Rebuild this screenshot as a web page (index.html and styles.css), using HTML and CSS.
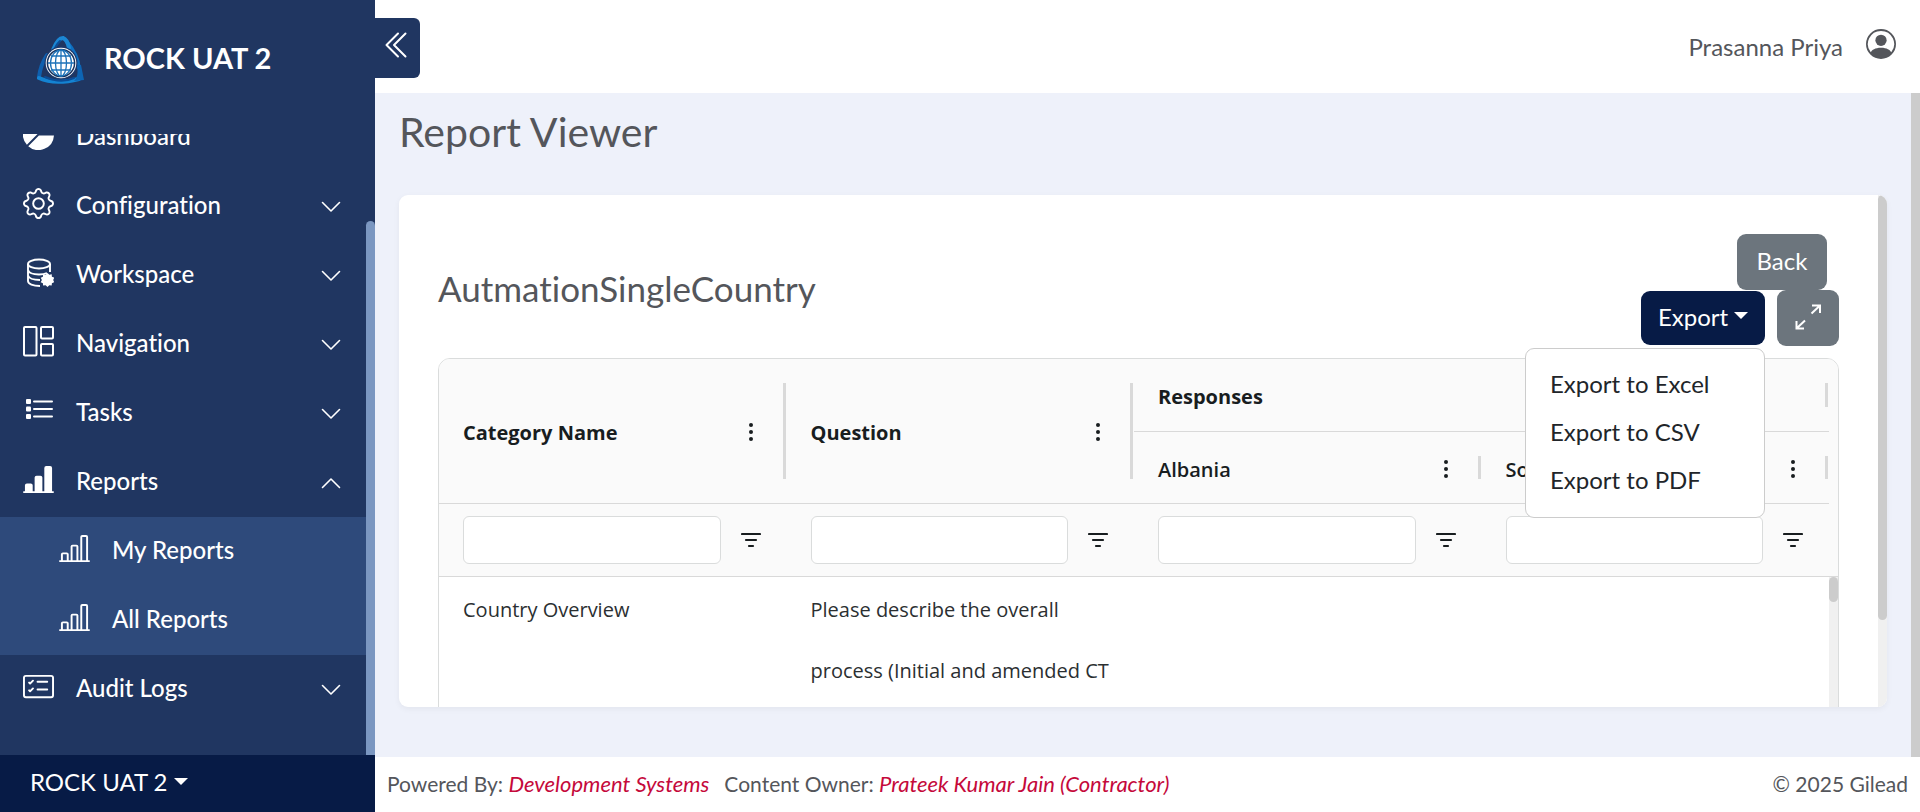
FILE: index.html
```html
<!DOCTYPE html>
<html lang="en">
<head>
<meta charset="utf-8">
<title>Report Viewer</title>
<link rel="stylesheet" href="styles.css">
</head>
<body>
<svg class="sprite" aria-hidden="true">
  <symbol id="chevron-down" viewBox="0 0 20 12"><path d="M1.500 1.500 10 10l8.500-8.500" fill="none" stroke="currentColor" stroke-width="1.600" stroke-linecap="round" stroke-linejoin="round"/></symbol>
  <symbol id="bars" viewBox="0 0 16 16"><path d="M11 2a1 1 0 0 1 1-1h2a1 1 0 0 1 1 1v12h.5a.5.5 0 0 1 0 1H.5a.5.5 0 0 1 0-1H1v-3a1 1 0 0 1 1-1h2a1 1 0 0 1 1 1v3h1V7a1 1 0 0 1 1-1h2a1 1 0 0 1 1 1v7h1V2zm1 12h2V2h-2v12zm-3 0V7H7v7h2zm-5 0v-3H2v3h2z"/></symbol>
  <symbol id="dots" viewBox="0 0 20 20"><circle cx="10" cy="2" r="2"/><circle cx="10" cy="9" r="2"/><circle cx="10" cy="16" r="2"/></symbol>
  <symbol id="filter" viewBox="0 0 20 20"><path d="M1 4h18M5 10h10M8 16h4" fill="none" stroke="currentColor" stroke-width="2.200" stroke-linecap="round"/></symbol>
</svg>
<div class="app">
  <aside class="sidebar">
    <div class="brand">
      <svg class="logo" viewBox="0 0 48 48" aria-hidden="true">
        <g fill="none" stroke-linecap="round">
          <path d="M11 19C7 25 4 33 3 41" stroke="#0f5fae" stroke-width="4"/>
          <path d="M31 6c6 7 11 15 12 26" stroke="#0e6fc0" stroke-width="3.500"/>
          <path d="M17 14C20 6 23 2 27 2c3 1 5 5 6 10" stroke="#1b86d3" stroke-width="4"/>
          <path d="M24 5c-3 3-5 6-6 10" stroke="#0b4c96" stroke-width="2"/>
          <path d="M3 42c11 5 24 5 40 1" stroke="#1483d2" stroke-width="4"/>
          <path d="M9 41c9 4 20 5 29 1" stroke="#0b4c96" stroke-width="2"/>
        </g>
        <path d="M41 29h4l3 15-10 1c4-4 4-9 3-16z" fill="#0d65b4"/>
        <circle cx="25" cy="27" r="16.500" fill="#1b396c"/>
        <circle cx="25" cy="27" r="15.300" fill="#fff"/>
        <circle cx="25" cy="27" r="13.600" fill="#fff" stroke="#16335f" stroke-width="1.500"/>
        <g fill="none" stroke="#1c72b8" stroke-width="1.300"><path d="M25 14v26M12 27h26M15 20h20M15 34h20"/><ellipse cx="25" cy="27" rx="5.500" ry="13"/><ellipse cx="25" cy="27" rx="10.500" ry="13"/></g>
      </svg>
      <span class="brand-name">ROCK UAT 2</span>
    </div>
    <div class="nav-wrap">
      <nav class="nav">
        <a class="nav-item" href="#"><svg class="icon" viewBox="0 0 16 16"><path d="M15.985 8.500H8.207l-5.500 5.500a8 8 0 0 0 13.277-5.500zM2 13.292A8 8 0 0 1 7.500.015v7.778l-5.500 5.500zM8.500.015V7.500h7.485A8.001 8.001 0 0 0 8.500.015z"/></svg><span>Dashboard</span></a>
        <a class="nav-item" href="#"><svg class="icon" viewBox="0 0 16 16"><path d="M8 4.754a3.246 3.246 0 1 0 0 6.492 3.246 3.246 0 0 0 0-6.492zM5.754 8a2.246 2.246 0 1 1 4.492 0 2.246 2.246 0 0 1-4.492 0z"/><path d="M9.796 1.343c-.527-1.790-3.065-1.790-3.592 0l-.094.319a.873.873 0 0 1-1.255.52l-.292-.16c-1.640-.892-3.433.902-2.540 2.541l.159.292a.873.873 0 0 1-.52 1.255l-.319.094c-1.790.527-1.790 3.065 0 3.592l.319.094a.873.873 0 0 1 .52 1.255l-.16.292c-.892 1.640.901 3.434 2.541 2.540l.292-.159a.873.873 0 0 1 1.255.52l.094.319c.527 1.790 3.065 1.790 3.592 0l.094-.319a.873.873 0 0 1 1.255-.52l.292.16c1.640.893 3.434-.902 2.540-2.541l-.159-.292a.873.873 0 0 1 .52-1.255l.319-.094c1.790-.527 1.790-3.065 0-3.592l-.319-.094a.873.873 0 0 1-.52-1.255l.16-.292c.893-1.640-.902-3.433-2.541-2.540l-.292.159a.873.873 0 0 1-1.255-.52l-.094-.319zm-2.633.283c.246-.835 1.428-.835 1.674 0l.094.319a1.873 1.873 0 0 0 2.693 1.115l.291-.16c.764-.415 1.600.42 1.184 1.185l-.159.292a1.873 1.873 0 0 0 1.116 2.692l.318.094c.835.246.835 1.428 0 1.674l-.319.094a1.873 1.873 0 0 0-1.115 2.693l.16.291c.415.764-.42 1.600-1.185 1.184l-.291-.159a1.873 1.873 0 0 0-2.693 1.116l-.094.318c-.246.835-1.428.835-1.674 0l-.094-.319a1.873 1.873 0 0 0-2.692-1.115l-.292.16c-.764.415-1.600-.42-1.184-1.185l.159-.291A1.873 1.873 0 0 0 1.945 8.930l-.319-.094c-.835-.246-.835-1.428 0-1.674l.319-.094A1.873 1.873 0 0 0 3.060 4.377l-.16-.292c-.415-.764.42-1.600 1.185-1.184l.292.159a1.873 1.873 0 0 0 2.692-1.115l.094-.319z"/></svg><span>Configuration</span><svg class="chevron"><use href="#chevron-down"/></svg></a>
        <a class="nav-item" href="#"><svg class="icon" viewBox="0 0 31 31"><g fill="none" stroke="currentColor" stroke-width="1.900"><ellipse cx="16" cy="7" rx="11" ry="4.500"/><path d="M5 7v17c0 3 5 5 12 5M27 7v8M5 13c1 3 6 4.500 11 4.500 3 0 6-.5 8-1.500M5 18.500c1 3 5 4.500 12 4.500"/></g><path d="m24.500 16 1.800 1.800 2.400-.6.200 2.500 2.300 1-1 2.200 1 2.300-2.300 1-.2 2.400-2.400-.4-1.800 1.800-1.900-1.800-2.500.4-.2-2.400-2.200-1 1.200-2.300-1.200-2.200 2.200-1 .2-2.500 2.500.6z"/></svg><span>Workspace</span><svg class="chevron"><use href="#chevron-down"/></svg></a>
        <a class="nav-item" href="#"><svg class="icon" viewBox="0 0 31 31"><g fill="none" stroke="currentColor" stroke-width="2"><rect x="1" y="1" width="12.500" height="28.500" rx="1"/><rect x="18" y="1" width="12" height="11.500" rx="1"/><rect x="18" y="18" width="12" height="11.500" rx="1"/></g></svg><span>Navigation</span><svg class="chevron"><use href="#chevron-down"/></svg></a>
        <a class="nav-item" href="#"><svg class="icon" viewBox="0 0 31 31"><rect x="3" y="4" width="5" height="5" rx="1"/><rect x="3" y="11.500" width="5" height="5" rx="1"/><rect x="3" y="19" width="5" height="5" rx="1"/><path d="M11 6.500h18M11 14h18M11 21.500h18" fill="none" stroke="currentColor" stroke-width="2" stroke-linecap="round"/></svg><span>Tasks</span><svg class="chevron"><use href="#chevron-down"/></svg></a>
        <a class="nav-item" href="#"><svg class="icon" viewBox="0 0 16 16"><path d="M11 2a1 1 0 0 1 1-1h2a1 1 0 0 1 1 1v12h.5a.5.5 0 0 1 0 1H.5a.5.5 0 0 1 0-1H1v-3a1 1 0 0 1 1-1h2a1 1 0 0 1 1 1v3h1V7a1 1 0 0 1 1-1h2a1 1 0 0 1 1 1v7h1V2z"/></svg><span>Reports</span><svg class="chevron open"><use href="#chevron-down"/></svg></a>
        <div class="subnav">
          <a class="nav-item" href="#"><svg class="icon"><use href="#bars"/></svg><span>My Reports</span></a>
          <a class="nav-item" href="#"><svg class="icon"><use href="#bars"/></svg><span>All Reports</span></a>
        </div>
        <a class="nav-item" href="#"><svg class="icon" viewBox="0 0 16 16"><path d="M14.500 3a.5.5 0 0 1 .5.5v9a.5.5 0 0 1-.5.5h-13a.5.5 0 0 1-.5-.5v-9a.5.5 0 0 1 .5-.5h13zm-13-1A1.500 1.500 0 0 0 0 3.500v9A1.500 1.500 0 0 0 1.500 14h13a1.500 1.500 0 0 0 1.500-1.500v-9A1.500 1.500 0 0 0 14.500 2h-13z"/><path d="M7 5.500a.5.5 0 0 1 .5-.5h5a.5.5 0 0 1 0 1h-5a.5.5 0 0 1-.5-.5zm-1.496-.854a.5.5 0 0 1 0 .708l-1.500 1.500a.5.5 0 0 1-.708 0l-.5-.5a.5.5 0 1 1 .708-.708l.146.147 1.146-1.147a.5.5 0 0 1 .708 0zM7 9.500a.5.5 0 0 1 .5-.5h5a.5.5 0 0 1 0 1h-5a.5.5 0 0 1-.5-.5zm-1.496-.854a.5.5 0 0 1 0 .708l-1.500 1.500a.5.5 0 0 1-.708 0l-.5-.5a.5.5 0 0 1 .708-.708l.146.147 1.146-1.147a.5.5 0 0 1 .708 0z"/></svg><span>Audit Logs</span><svg class="chevron"><use href="#chevron-down"/></svg></a>
      </nav>
      <div class="nav-track"><div class="nav-thumb"></div></div>
    </div>
    <button class="tenant" type="button">ROCK UAT 2<span class="caret"></span></button>
  </aside>

  <div class="page">
    <header class="topbar">
      <button class="collapse" type="button" aria-label="Collapse menu"><svg viewBox="0 0 22 26"><path d="M13 1.500 1.500 13 13 24.500M20.500 1.500 9 13l11.500 11.500" fill="none" stroke="currentColor" stroke-width="2" stroke-linecap="round" stroke-linejoin="round"/></svg></button>
      <a class="user" href="#"><span>Prasanna Priya</span><svg class="avatar" viewBox="0 0 16 16"><path d="M11 6a3 3 0 1 1-6 0 3 3 0 0 1 6 0z"/><path fill-rule="evenodd" d="M0 8a8 8 0 1 1 16 0A8 8 0 0 1 0 8zm8-7a7 7 0 0 0-5.468 11.370C3.242 11.226 4.805 10 8 10s4.757 1.225 5.468 2.370A7 7 0 0 0 8 1z"/></svg></a>
    </header>

    <div class="content">
      <main class="main">
        <h1 class="page-title">Report Viewer</h1>
        <section class="card">
          <div class="card-body">
            <div class="report-head">
              <h2 class="report-name">AutmationSingleCountry</h2>
              <div class="actions">
                <button class="btn btn-back" type="button">Back</button>
                <div class="action-row">
                  <div class="dropdown">
                    <button class="btn btn-export" type="button">Export<span class="caret"></span></button>
                    <div class="menu">
                      <a href="#">Export to Excel</a>
                      <a href="#">Export to CSV</a>
                      <a href="#">Export to PDF</a>
                    </div>
                  </div>
                  <button class="btn btn-expand" type="button" aria-label="Full screen"><svg viewBox="0 0 26 26"><path d="M17 1.500h8V9M24.500 2 16.500 9.500M9 24.500H1.500V17M2 24l8-7.500" fill="none" stroke="currentColor" stroke-width="2"/></svg></button>
                </div>
              </div>
            </div>
            <div class="grid">
              <div class="grid-main">
                <table class="table">
                  <thead>
                    <tr>
                      <th rowspan="2" scope="col"><div class="head tall"><span>Category Name</span><svg class="glyph"><use href="#dots"/></svg><i class="resizer"></i></div></th>
                      <th rowspan="2" scope="col"><div class="head tall"><span>Question</span><svg class="glyph"><use href="#dots"/></svg><i class="resizer"></i></div></th>
                      <th colspan="2" scope="colgroup"><div class="head"><span>Responses</span><i class="resizer"></i></div></th>
                    </tr>
                    <tr>
                      <th scope="col"><div class="head light"><span>Albania</span><svg class="glyph"><use href="#dots"/></svg><i class="resizer"></i></div></th>
                      <th scope="col"><div class="head light"><span>So</span><svg class="glyph"><use href="#dots"/></svg><i class="resizer"></i></div></th>
                    </tr>
                    <tr class="filter-row">
                      <td><div class="filter"><input type="text" aria-label="Category Name filter"><svg class="glyph"><use href="#filter"/></svg></div></td>
                      <td><div class="filter"><input type="text" aria-label="Question filter"><svg class="glyph"><use href="#filter"/></svg></div></td>
                      <td><div class="filter"><input type="text" aria-label="First response filter"><svg class="glyph"><use href="#filter"/></svg></div></td>
                      <td><div class="filter"><input type="text" aria-label="Second response filter"><svg class="glyph"><use href="#filter"/></svg></div></td>
                    </tr>
                  </thead>
                  <tbody>
                    <tr><td>Country Overview</td><td>Please describe the overall process (Initial and amended CT</td><td></td><td></td></tr>
                  </tbody>
                </table>
              </div>
              <div class="grid-side"><div class="grid-corner"></div><div class="grid-track"><div class="grid-thumb"></div></div></div>
            </div>
          </div>
          <div class="card-track"><div class="card-thumb"></div></div>
        </section>
      </main>
      <div class="page-thumb"></div>
    </div>

    <footer class="footer">
      <span>Powered By: <a href="#">Development Systems</a></span>
      <span>Content Owner: <a href="#">Prateek Kumar Jain (Contractor)</a></span>
      <span class="copyright">© 2025 Gilead</span>
    </footer>
  </div>
</div>
</body>
</html>
```
FILE: styles.css
```css
* { box-sizing: border-box; }

body {
  margin: 0;
  font: 24px/36px Lato, "Open Sans", sans-serif;
  font-variant-ligatures: none;
  color: #54565b;
}

a { color: inherit; text-decoration: none; }
button { font: inherit; border: 0; padding: 0; cursor: pointer; }
svg { fill: currentColor; flex: none; }
.sprite { display: none; }

.app { display: flex; height: 100vh; background: #fff; }

/* Sidebar */
.sidebar {
  flex: 0 0 375px;
  display: flex;
  flex-direction: column;
  background: #203661;
  color: #fff;
}
.brand {
  flex: 0 0 134px;
  display: flex;
  gap: 20px;
  padding: 36px 36px 0;
}
.logo { width: 48px; height: 48px; }
.brand-name { font-size: 29px; font-weight: 700; line-height: 44px; }

.nav-wrap { flex: 1; min-height: 0; display: flex; overflow: hidden; }
.nav {
  flex: 1;
  display: flex;
  flex-direction: column;
  justify-content: flex-end;
  padding-bottom: 31px;
}
.nav-item {
  flex: none;
  display: flex;
  align-items: center;
  gap: 22px;
  height: 69px;
  padding: 0 25px 0 23px;
  font-weight: 500;
}
.nav-item span { padding-bottom: 4px; }
.icon { width: 31px; height: 31px; margin-bottom: 7px; }
.chevron { width: 20px; height: 12px; margin-left: auto; }
.chevron.open { transform: rotate(180deg); }
.subnav { flex: none; background: #2e4a7b; }
.subnav .nav-item { padding-left: 59px; }
.nav-track { flex: none; width: 9px; padding-top: 87px; }
.nav-thumb { height: 100%; background: #7b97c1; border-radius: 5px 5px 0 0; }

.tenant {
  flex: 0 0 57px;
  padding: 0 30px 3px;
  background: #071b46;
  color: #fff;
  text-align: left;
}
.caret {
  display: inline-block;
  margin-left: 6px;
  vertical-align: 6px;
  border: 7px solid transparent;
  border-top-color: currentColor;
  border-bottom: 0;
}

/* Top bar */
.page { flex: 1; min-width: 0; display: flex; flex-direction: column; }
.topbar {
  flex: 0 0 93px;
  display: flex;
  align-items: center;
  justify-content: space-between;
  padding-right: 24px;
}
.collapse {
  display: flex;
  align-items: center;
  justify-content: center;
  width: 45px;
  height: 60px;
  margin-top: 3px;
  padding: 0 4px 7px 0;
  border-radius: 0 6px 6px 0;
  background: #203661;
  color: #fff;
}
.collapse svg { width: 22px; height: 26px; }
.user { display: flex; align-items: center; gap: 23px; }
.avatar { width: 30px; height: 30px; margin-bottom: 5px; }

/* Content */
.content { flex: 1; min-height: 0; display: flex; background: #eef1fa; }
.main {
  flex: 1;
  min-width: 0;
  display: flex;
  flex-direction: column;
  padding: 0 24px 50px;
}
.page-thumb { flex: none; width: 9px; background: #ccc; }
.page-title {
  margin: 0;
  padding: 15px 0 39px;
  font-size: 41px;
  font-weight: 400;
  line-height: 48px;
}
.card {
  flex: 1;
  min-height: 0;
  display: flex;
  overflow: hidden;
  background: #fff;
  border-radius: 9px;
  box-shadow: 0 2px 6px rgba(0, 0, 0, 0.05);
}
.card-body { flex: 1; min-width: 0; padding: 39px; }
.card-track { flex: none; width: 9px; background: #f0f0f0; }
.card-thumb { height: 83%; background: #ccc; border-radius: 5px; }

.report-head {
  display: flex;
  align-items: center;
  justify-content: space-between;
  margin-bottom: 12px;
}
.report-name {
  margin: 0;
  padding-bottom: 5px;
  font-size: 35px;
  font-weight: 400;
  line-height: 40px;
}
.actions { display: flex; flex-direction: column; align-items: flex-end; }
.action-row { display: flex; align-items: center; gap: 12px; }
.btn {
  display: flex;
  align-items: center;
  justify-content: center;
  height: 56px;
  padding-bottom: 2px;
  border-radius: 9px;
  background: #6c757d;
  color: #fff;
  white-space: nowrap;
}
.btn-back { width: 90px; margin-right: 12px; }
.btn-export { width: 124px; height: 54px; background: #071b46; }
.btn-export .caret { margin-bottom: 4px; }
.btn-expand { width: 62px; }
.btn-expand svg { width: 26px; height: 26px; }
.dropdown { position: relative; }
.menu {
  position: absolute;
  z-index: 2;
  top: 57px;
  right: 0;
  width: 240px;
  padding: 11px 0 13px;
  border: 1px solid #ccc;
  border-radius: 9px;
  background: #fff;
  color: #212529;
}
.menu a { display: block; padding: 6px 24px; }

/* Data grid */
.grid {
  display: flex;
  overflow: hidden;
  border: 1px solid #dadcdc;
  border-radius: 12px;
  font: 20px/28px "Open Sans", "Noto Sans", sans-serif;
  color: #181d1f;
}
.grid-main { flex: 1; min-width: 0; }
.table {
  width: 100%;
  table-layout: fixed;
  border-collapse: separate;
  border-spacing: 0;
}
.table th, .table td { padding: 0; text-align: left; vertical-align: top; }
.table thead { background: #fafafa; }
.table th, .filter-row td { border-bottom: 1px solid #d9d9d9; }
.head {
  position: relative;
  display: flex;
  align-items: center;
  justify-content: space-between;
  height: 72px;
  padding: 4px 26px 0 24px;
  font-weight: 700;
}
.head.tall { height: 144px; }
.head.light { font-weight: 600; height: 71px; }
.glyph { width: 20px; height: 20px; }
.resizer {
  position: absolute;
  right: 1px;
  top: 24px;
  bottom: 24px;
  width: 3px;
  background: #d9d9d9;
}
.filter {
  display: flex;
  align-items: center;
  gap: 20px;
  height: 72px;
  padding: 0 26px 0 24px;
}
.filter input {
  flex: 1;
  min-width: 0;
  height: 48px;
  padding: 0 8px;
  border: 1px solid #dadcdc;
  border-radius: 6px;
  background: #fff;
  font: inherit;
}
.table tbody td {
  height: 248px;
  padding: 2px 24px;
  line-height: 61px;
  color: #2b2f31;
}
.grid-side { flex: none; width: 9px; display: flex; flex-direction: column; }
.grid-corner { flex: 0 0 218px; background: #fafafa; border-bottom: 1px solid #d9d9d9; }
.grid-track { flex: 1; background: #f0f0f0; }
.grid-thumb { height: 25px; background: #ccc; border-radius: 5px; }

/* Footer */
.footer {
  flex: 0 0 55px;
  display: flex;
  align-items: center;
  gap: 15px;
  padding: 0 12px 2px;
  font-size: 21px;
  line-height: 28px;
}
.footer a { color: #c5093b; font-size: 22px; font-style: italic; }
.copyright { margin-left: auto; }
```
